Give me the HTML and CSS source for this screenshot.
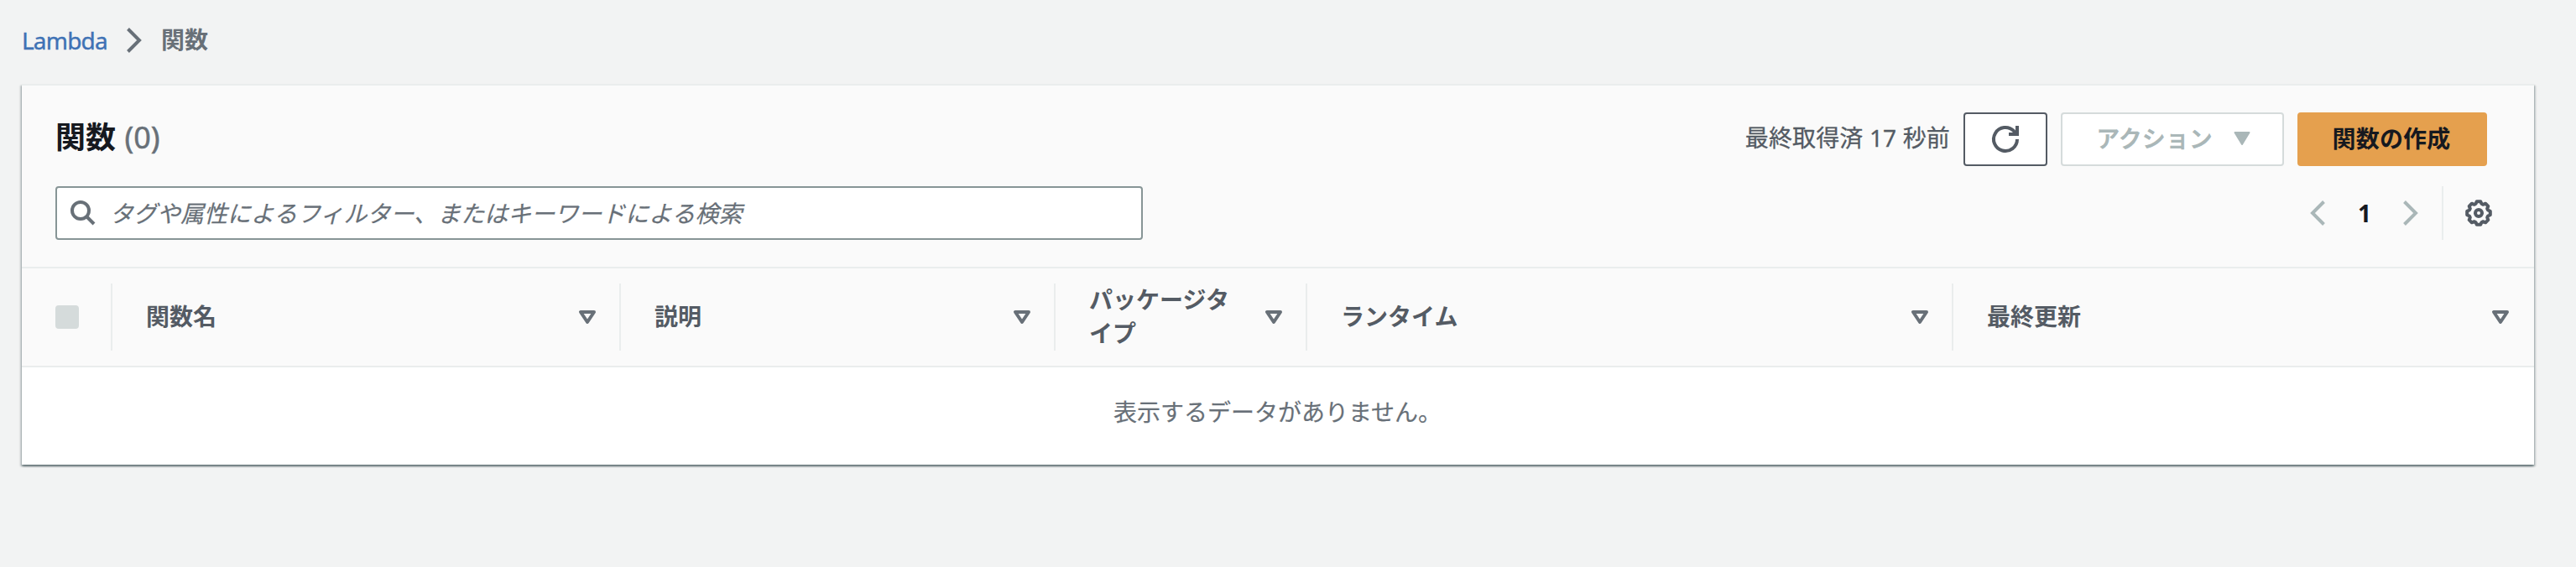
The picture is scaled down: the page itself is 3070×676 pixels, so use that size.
FILE: index.html
```html
<!DOCTYPE html>
<html lang="ja">
<head>
<meta charset="utf-8">
<title>関数 - Lambda</title>
<link rel="stylesheet" href="styles.css">
</head>
<body>
<nav class="breadcrumb">
  <a class="crumb-link" href="#">Lambda</a>
  <svg class="crumb-sep" viewBox="0 0 18 30"><path d="M1.500 1.500L15 15 1.500 28.500"/></svg>
  <span class="crumb-current">関数</span>
</nav>
<main class="panel">
  <header class="panel-head">
    <div class="title-row">
      <h1 class="title">関数 <span class="count">(0)</span></h1>
      <div class="actions">
        <span class="fetched">最終取得済 17 秒前</span>
        <button class="btn btn-refresh" aria-label="更新"><svg class="icon" viewBox="0 0 32 32"><path d="M30 16A14 14 0 1 1 26 6.200L29 10"/><path d="M30 0v10H20"/></svg></button>
        <button class="btn btn-disabled" disabled><span>アクション</span><svg class="caret" viewBox="0 0 20 16"><path d="M1.500 1h17L10 15z"/></svg></button>
        <button class="btn btn-primary">関数の作成</button>
      </div>
    </div>
    <div class="filter-row">
      <div class="search">
        <svg class="search-icon" viewBox="0 0 30 30"><circle cx="12" cy="12" r="10"/><path d="M19 19l9 9"/></svg>
        <span class="placeholder">タグや属性によるフィルター、またはキーワードによる検索</span>
      </div>
      <div class="pager">
        <svg class="chevron" viewBox="0 0 18 30"><path d="M16.500 1.500L3 15l13.500 13.500"/></svg>
        <span class="page">1</span>
        <svg class="chevron" viewBox="0 0 18 30"><path d="M1.500 1.500L15 15 1.500 28.500"/></svg>
        <span class="pager-rule"></span>
        <svg class="icon gear" viewBox="-16 -16 32 32"><path d="M-2.200-13.800H2.200L3.500-11 5.300-10.200 8.200-11.300 11.300-8.200 10.200-5.300 11-3.500 13.800-2.200V2.200L11 3.500 10.200 5.300 11.300 8.200 8.200 11.300 5.300 10.200 3.500 11 2.200 13.800H-2.200L-3.500 11-5.300 10.200-8.200 11.300-11.300 8.200-10.200 5.300-11 3.500-13.800 2.200V-2.200L-11-3.500-10.200-5.300-11.300-8.200-8.200-11.300-5.300-10.200-3.500-11z"/><circle r="4"/></svg>
      </div>
    </div>
  </header>
  <div class="table-head">
    <div class="cell cell-check"><span class="checkbox"></span></div>
    <div class="cell"><span class="label">関数名</span><svg class="sort" viewBox="0 0 20 16"><path d="M2 2h16l-8 12z"/></svg></div>
    <div class="cell"><span class="label">説明</span><svg class="sort" viewBox="0 0 20 16"><path d="M2 2h16l-8 12z"/></svg></div>
    <div class="cell"><span class="label">パッケージタイプ</span><svg class="sort" viewBox="0 0 20 16"><path d="M2 2h16l-8 12z"/></svg></div>
    <div class="cell"><span class="label">ランタイム</span><svg class="sort" viewBox="0 0 20 16"><path d="M2 2h16l-8 12z"/></svg></div>
    <div class="cell"><span class="label">最終更新</span><svg class="sort" viewBox="0 0 20 16"><path d="M2 2h16l-8 12z"/></svg></div>
  </div>
  <div class="empty">表示するデータがありません。</div>
</main>
</body>
</html>
```
FILE: styles.css
```css
* { box-sizing: border-box; }
body {
  margin: 0;
  min-height: 676px;
  padding: 0 50px 0 26px;
  background: #f2f3f3;
  color: #16191f;
  font: 28px/40px "Noto Sans", "Noto Sans CJK JP", sans-serif;
}
svg { display: block; flex: none; fill: none; stroke: currentColor; stroke-width: 4; overflow: visible; }
.breadcrumb { display: flex; align-items: center; height: 100px; padding-bottom: 4px; color: #687078; }
.crumb-link { width: 101px; padding-bottom: 1px; color: #3f72b5; text-decoration: none; letter-spacing: -0.8px; -webkit-text-stroke: 0.4px; }
.crumb-sep { width: 18px; height: 30px; margin: 0 23px 0 24px; }
.crumb-current { padding-bottom: 2px; font-weight: 700; }
.panel {
  border-top: 2px solid #eaeded;
  background: #fff;
  box-shadow: 0 2px 2px rgba(0, 28, 36, .4), 2px 2px 2px rgba(0, 28, 36, .18), -2px 2px 2px rgba(0, 28, 36, .18);
}
.panel-head { height: 218px; padding: 32px 50px 0 40px; background: #fafafa; border-bottom: 2px solid #eaeded; }
.title-row { display: flex; align-items: center; justify-content: space-between; height: 64px; padding-right: 6px; }
.title { margin: 0; padding-bottom: 4px; font-size: 36px; line-height: 44px; font-weight: 700; }
.count { margin-left: 1px; color: #687078; font-weight: 400; -webkit-text-stroke: 0.5px; }
.actions { display: flex; align-items: center; gap: 16px; color: #545b64; }
.fetched { padding-bottom: 4px; letter-spacing: 0.15px; -webkit-text-stroke: 0.3px; }
.btn {
  display: flex; align-items: center; justify-content: center;
  height: 64px; padding: 0 0 2px; border: 2px solid #545b64; border-radius: 4px;
  background: #fff; color: #545b64; font: inherit; font-weight: 700;
}
.btn-refresh { width: 100px; padding: 0; }
.btn-disabled { width: 266px; gap: 25px; padding-left: 2px; border-color: #d5dbdb; color: #aab7b8; }
.btn-primary { width: 226px; padding-right: 2px; border-color: #e5a04e; background: #e5a04e; color: #16191f; letter-spacing: 0.2px; }
.icon { width: 32px; height: 32px; }
.caret { width: 20px; height: 16px; fill: currentColor; stroke-width: 2; stroke-linejoin: round; }
.filter-row { display: flex; align-items: center; justify-content: space-between; margin-top: 24px; }
.search {
  display: flex; align-items: center; width: 1296px; height: 64px; padding-left: 16px;
  border: 2px solid #879596; border-radius: 4px; background: #fff; color: #687078;
}
.search-icon { width: 30px; height: 30px; }
.placeholder { margin-left: 17px; font-style: italic; white-space: nowrap; -webkit-text-stroke: 0.2px; }
.pager { display: flex; align-items: center; color: #545b64; }
.chevron { width: 18px; height: 30px; color: #aab7b8; }
.page { width: 93px; padding-left: 1px; text-align: center; color: #16191f; font-weight: 700; }
.pager-rule { width: 2px; height: 64px; margin: 0 26px 0 28px; background: #eaeded; }
.gear { stroke-linejoin: round; }
.table-head {
  display: grid; grid-template-columns: 108px 606px 518px 300px 770px 692px; align-items: center;
  height: 118px; background: #fafafa; border-bottom: 2px solid #eaeded; color: #545b64; font-weight: 700;
}
.cell { display: flex; align-items: center; justify-content: space-between; height: 80px; padding: 0 28px 0 40px; border-right: 2px solid #eaeded; }
.cell:last-child { padding-right: 30px; border-right: 0; }
.label { max-width: 180px; padding-bottom: 2px; word-break: break-all; }
.checkbox { width: 28px; height: 28px; border-radius: 4px; background: #d5dbdb; }
.sort { width: 20px; height: 16px; color: #687078; stroke-linejoin: round; }
.empty { height: 116px; padding: 33px 1px 0 0; text-align: center; color: #687078; -webkit-text-stroke: 0.2px; }
```
